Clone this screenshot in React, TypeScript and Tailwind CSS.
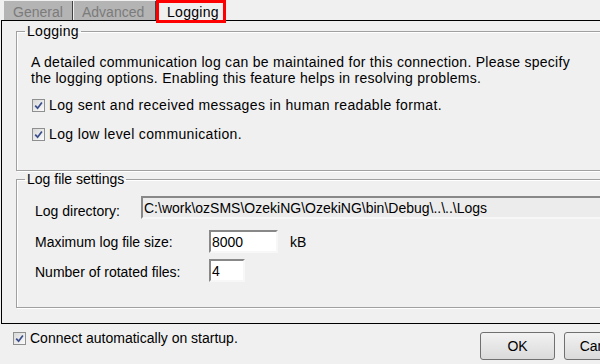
import React from "react";

const Check = () => (
  <span className="w-[13px] h-[13px] border border-[#8e8f8f] bg-gradient-to-br from-[#d8d8d8] to-[#fbfbfb] flex items-center justify-center shrink-0">
    <svg width="9" height="9" viewBox="0 0 9 9">
      <path d="M1.2 4.6 L3.6 7.2 L7.9 1.4" stroke="#3b4e8c" strokeWidth="1.7" fill="none" />
    </svg>
  </span>
);

const Box = ({ w, value, ro }: { w: string; value: string; ro?: boolean }) => (
  <div
    className={`${w} h-[23px] flex items-center pl-[1px] border-2 border-t-[#888888] border-l-[#888888] border-r-[#f7f7f7] border-b-[#f7f7f7] whitespace-nowrap overflow-hidden ${
      ro ? "bg-[#ececec]" : "bg-white"
    }`}
  >
    {value}
  </div>
);

export default function App() {
  return (
    <div className="w-[600px] h-[364px] overflow-hidden bg-[#f0f0f0] text-[14px] leading-[16px] text-black font-['Liberation_Sans',Arial,sans-serif]">
      {/* tabs */}
      <div className="flex items-end h-[20px] pl-[4px] relative z-10">
        <div className="h-[19px] w-[69px] bg-[#b4b4b4] text-[#7b7b7b] pl-[9px] pt-[3px] border-r border-[#404040]">
          General
        </div>
        <div className="h-[19px] w-[82px] ml-[1px] bg-[#b4b4b4] text-[#7b7b7b] pl-[8px] pt-[3px] border-r border-[#404040]">
          Advanced
        </div>
        <div className="h-[23px] w-[70px] mb-[-3px] border-[3px] border-[#ff0000] bg-[#f0f0f0] pl-[8px] pt-[1px] tracking-[0.3px]">
          Logging
        </div>
      </div>

      {/* panel */}
      <div className="ml-[1px] w-[660px] h-[304px] border border-black border-r-0 pl-[14px] pt-[2px] flex flex-col">
        <fieldset className="w-[640px] border border-[#a0a0a0] shadow-[inset_1px_1px_0_#ffffff,1px_1px_0_#ffffff]">
          <legend className="ml-[8px] px-[2px] tracking-[0.3px]">Logging</legend>
          <div className="pl-[14px] pt-[15px] pb-[28px]">
            <p className="tracking-[0.28px] whitespace-nowrap">
              A detailed communication log can be maintained for this connection. Please specify
              <br />
              the logging options. Enabling this feature helps in resolving problems.
            </p>
            <div className="flex items-center mt-[11px] pl-[1px] gap-[4px] h-[16px] tracking-[0.36px] whitespace-nowrap">
              <Check />
              <span>Log sent and received messages in human readable format.</span>
            </div>
            <div className="flex items-center mt-[13px] pl-[1px] gap-[4px] h-[16px] tracking-[0.36px] whitespace-nowrap">
              <Check />
              <span>Log low level communication.</span>
            </div>
          </div>
        </fieldset>

        <fieldset className="w-[640px] border border-[#a0a0a0] shadow-[inset_1px_1px_0_#ffffff,1px_1px_0_#ffffff]">
          <legend className="ml-[8px] px-[2px]">Log file settings</legend>
          <div className="pl-[18px] pt-[9px] pb-[25px]">
            <div className="flex items-start">
              <span className="w-[106px] pt-[7px]">Log directory:</span>
              <Box w="w-[500px]" value="C:\work\ozSMS\OzekiNG\OzekiNG\bin\Debug\..\..\Logs" ro />
            </div>
            <div className="flex items-start mt-[11px]">
              <span className="w-[174px] pt-[4px]">Maximum log file size:</span>
              <Box w="w-[69px]" value="8000" />
              <span className="ml-[12px] pt-[4px]">kB</span>
            </div>
            <div className="flex items-start mt-[6px]">
              <span className="w-[174px] pt-[5px]">Number of rotated files:</span>
              <Box w="w-[36px]" value="4" />
            </div>
          </div>
        </fieldset>
      </div>

      {/* bottom */}
      <div className="flex items-start w-[700px]">
        <div className="w-[480px] flex items-center gap-[4px] pl-[13px] mt-[6px] h-[16px] whitespace-nowrap">
          <Check />
          <span>Connect automatically on startup.</span>
        </div>
        <div className="flex gap-[9px] mt-[8px]">
          <button className="w-[75px] h-[28px] rounded-[3px] border border-[#707070] bg-gradient-to-b from-[#f2f2f2] to-[#dadada] text-[14px] text-black">
            OK
          </button>
          <button className="w-[75px] h-[28px] rounded-[3px] border border-[#707070] bg-gradient-to-b from-[#f2f2f2] to-[#dadada] text-[14px] text-black">
            Cancel
          </button>
        </div>
      </div>
    </div>
  );
}
